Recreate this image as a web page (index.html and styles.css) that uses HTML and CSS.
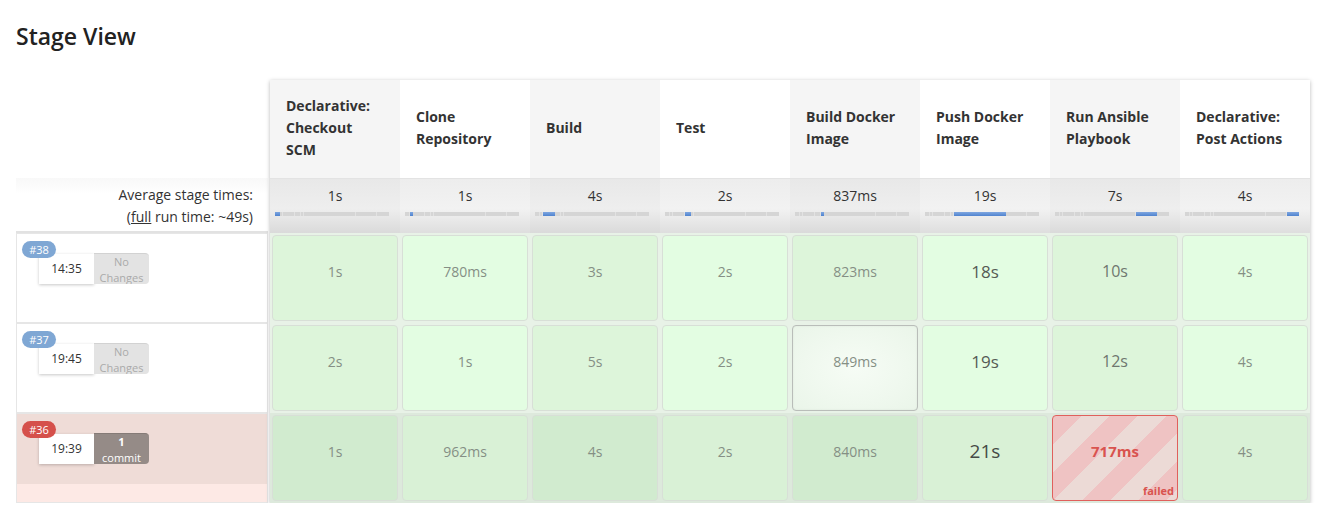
FILE: index.html
```html
<!DOCTYPE html>
<html>
<head>
<meta charset="utf-8">
<link rel="stylesheet" href="styles.css">
</head>
<body>
<div class="page">
  <h2 class="title">Stage View</h2>
  <div class="view">
    <div class="left">
      <div class="left-head"></div>
      <div class="avg-label">
        <div>Average stage times:</div>
        <div>(<span class="link">full</span> run time: ~49s)</div>
      </div>
      <div class="build">
        <div class="build-inner">
          <span class="badge blue">#38</span>
          <div class="stamp">
            <div class="time">14:35</div>
            <div class="changes">No<br>Changes</div>
          </div>
        </div>
      </div>
      <div class="build">
        <div class="build-inner">
          <span class="badge blue">#37</span>
          <div class="stamp">
            <div class="time">19:45</div>
            <div class="changes">No<br>Changes</div>
          </div>
        </div>
      </div>
      <div class="build failed-build">
        <div class="build-inner">
          <span class="badge red">#36</span>
          <div class="stamp">
            <div class="time">19:39</div>
            <div class="changes commit"><b>1</b><br>commit</div>
          </div>
        </div>
      </div>
    </div>

    <div class="stages">
      <div class="sh odd"><span>Declarative: Checkout SCM</span></div>
      <div class="sh"><span>Clone Repository</span></div>
      <div class="sh odd"><span>Build</span></div>
      <div class="sh"><span>Test</span></div>
      <div class="sh odd"><span>Build Docker Image</span></div>
      <div class="sh"><span>Push Docker Image</span></div>
      <div class="sh odd"><span>Run Ansible Playbook</span></div>
      <div class="sh"><span>Declarative: Post Actions</span></div>

      <div class="avg odd"><div class="avg-t">1s</div><div class="bar"><i class="on" style="width:5px"></i><i style="width:3px"></i><i style="width:12px"></i><i style="width:6px"></i><i style="width:3px"></i><i style="width:52px"></i><i style="width:21px"></i><i style="width:12px"></i></div></div>
      <div class="avg"><div class="avg-t">1s</div><div class="bar"><i style="width:5px"></i><i class="on" style="width:3px"></i><i style="width:12px"></i><i style="width:6px"></i><i style="width:3px"></i><i style="width:52px"></i><i style="width:21px"></i><i style="width:12px"></i></div></div>
      <div class="avg odd"><div class="avg-t">4s</div><div class="bar"><i style="width:5px"></i><i style="width:3px"></i><i class="on" style="width:12px"></i><i style="width:6px"></i><i style="width:3px"></i><i style="width:52px"></i><i style="width:21px"></i><i style="width:12px"></i></div></div>
      <div class="avg"><div class="avg-t">2s</div><div class="bar"><i style="width:5px"></i><i style="width:3px"></i><i style="width:12px"></i><i class="on" style="width:6px"></i><i style="width:3px"></i><i style="width:52px"></i><i style="width:21px"></i><i style="width:12px"></i></div></div>
      <div class="avg odd"><div class="avg-t">837ms</div><div class="bar"><i style="width:5px"></i><i style="width:3px"></i><i style="width:12px"></i><i style="width:6px"></i><i class="on" style="width:3px"></i><i style="width:52px"></i><i style="width:21px"></i><i style="width:12px"></i></div></div>
      <div class="avg"><div class="avg-t">19s</div><div class="bar"><i style="width:5px"></i><i style="width:3px"></i><i style="width:12px"></i><i style="width:6px"></i><i style="width:3px"></i><i class="on" style="width:52px"></i><i style="width:21px"></i><i style="width:12px"></i></div></div>
      <div class="avg odd"><div class="avg-t">7s</div><div class="bar"><i style="width:5px"></i><i style="width:3px"></i><i style="width:12px"></i><i style="width:6px"></i><i style="width:3px"></i><i style="width:52px"></i><i class="on" style="width:21px"></i><i style="width:12px"></i></div></div>
      <div class="avg"><div class="avg-t">4s</div><div class="bar"><i style="width:5px"></i><i style="width:3px"></i><i style="width:12px"></i><i style="width:6px"></i><i style="width:3px"></i><i style="width:52px"></i><i style="width:21px"></i><i class="on" style="width:12px"></i></div></div>

      <div class="cell odd"><div class="box">1s</div></div>
      <div class="cell"><div class="box">780ms</div></div>
      <div class="cell odd"><div class="box">3s</div></div>
      <div class="cell"><div class="box">2s</div></div>
      <div class="cell odd"><div class="box">823ms</div></div>
      <div class="cell"><div class="box big">18s</div></div>
      <div class="cell odd"><div class="box mid">10s</div></div>
      <div class="cell"><div class="box">4s</div></div>

      <div class="cell odd"><div class="box">2s</div></div>
      <div class="cell"><div class="box">1s</div></div>
      <div class="cell odd"><div class="box">5s</div></div>
      <div class="cell"><div class="box">2s</div></div>
      <div class="cell odd"><div class="box hover">849ms</div></div>
      <div class="cell"><div class="box big">19s</div></div>
      <div class="cell odd"><div class="box mid">12s</div></div>
      <div class="cell"><div class="box">4s</div></div>

      <div class="cell odd last"><div class="box">1s</div></div>
      <div class="cell last"><div class="box">962ms</div></div>
      <div class="cell odd last"><div class="box">4s</div></div>
      <div class="cell last"><div class="box">2s</div></div>
      <div class="cell odd last"><div class="box">840ms</div></div>
      <div class="cell last"><div class="box huge">21s</div></div>
      <div class="cell odd last"><div class="box fail">717ms<span class="fail-tag">failed</span></div></div>
      <div class="cell last"><div class="box">4s</div></div>
    </div>
  </div>
</div>
</body>
</html>
```

FILE: styles.css
```css
* { box-sizing: border-box; }

html, body {
  margin: 0;
  padding: 0;
  background: #fff;
}

body {
  font-family: "Open Sans", "Noto Sans", sans-serif;
  font-size: 14px;
  color: #333;
}

.page {
  padding: 0 16px;
}

.title {
  margin: 19px 0 27px;
  font-size: 23px;
  line-height: 34px;
  font-weight: 600;
  color: #222;
}

.view {
  display: flex;
  align-items: flex-start;
}

/* ---------- left column ---------- */
.left {
  width: 252px;
  margin-right: 2px;
  display: flex;
  flex-direction: column;
}

.left-head {
  height: 98px;
}

.avg-label {
  height: 55px;
  padding: 6px 15px 0 0;
  text-align: right;
  line-height: 22px;
  font-size: 14px;
  color: #333;
  background: linear-gradient(to bottom, #f8f8f8 0%, #fff 30%, #fff 100%);
  border-bottom: 2px solid #e2e2e2;
}

.link {
  text-decoration: underline;
}

.build {
  height: 90px;
  border: 1px solid #e6e6e6;
  background: #fff;
}

.build-inner {
  height: 70px;
  padding: 7px 0 0 5px;
}

.failed-build {
  background: #fde9e5;
}

.failed-build .build-inner {
  background: #efdcd7;
}

.badge {
  display: block;
  width: 34px;
  height: 17px;
  border-radius: 9px;
  font-size: 11px;
  line-height: 17px;
  text-align: center;
  color: #fff;
  position: relative;
  z-index: 1;
}

.badge.blue { background: #7fa7d4; }
.badge.red { background: #d5504b; }

.stamp {
  display: flex;
  margin: -4px 0 0 17px;
}

.time {
  width: 55px;
  height: 30px;
  background: #fff;
  box-shadow: 0 1px 3px rgba(0, 0, 0, 0.22);
  font-size: 12px;
  line-height: 30px;
  text-align: center;
  color: #333;
}

.changes {
  width: 55px;
  height: 31px;
  margin-top: -1px;
  overflow: hidden;
  background: #e3e3e3;
  border-top: 1px solid #d2d2d2;
  border-radius: 0 4px 4px 0;
  font-size: 11px;
  line-height: 16px;
  text-align: center;
  color: #aaa;
}

.changes.commit {
  background: #958b87;
  border-top-color: #857b77;
  color: #fff;
}

/* ---------- stage grid ---------- */
.stages {
  display: grid;
  grid-template-columns: repeat(8, 130px);
  grid-template-rows: 98px 55px 90px 90px 90px;
  box-shadow: 0 1px 4px rgba(0, 0, 0, 0.28);
}

.sh {
  display: flex;
  align-items: center;
  padding: 0 22px 2px 16px;
  background: #fff;
  font-weight: 700;
  font-size: 14px;
  line-height: 22px;
  color: #333;
}

.sh.odd {
  background: #f5f5f5;
}

.avg {
  padding-top: 6px;
  background: linear-gradient(to bottom, #ededed 0%, #f2f2f2 55%, #dedede 100%);
  border-top: 1px solid #e3e3e3;
}

.avg.odd {
  background: linear-gradient(to bottom, #e8e8e8 0%, #eeeeee 55%, #dadada 100%);
}

.avg-t {
  text-align: center;
  line-height: 22px;
  color: #333;
}

.bar {
  display: flex;
  width: 114px;
  height: 4px;
  margin: 5px 0 0 5px;
  background: #d7d7d7;
}

.bar i {
  display: block;
  height: 4px;
  background: #d5d5d5;
  border-right: 1px solid #e2e2e2;
}

.bar i:last-child {
  border-right: 0;
}

.bar i.on {
  background: linear-gradient(to bottom, #7ea6e0, #4f83cf);
  border-right: 0;
}

.cell {
  padding: 2px;
  background: #e8f2e7;
}

.cell.last {
  background: #dde9dc;
}

.box {
  height: 86px;
  display: flex;
  align-items: center;
  justify-content: center;
  padding-bottom: 14px;
  border: 1px solid #d8dfd7;
  border-radius: 4px;
  background: #e3fde2;
  font-size: 14px;
  color: #858f85;
  position: relative;
}

.cell.odd .box {
  background: #ddf5da;
}

.cell.last .box {
  background: #d9f1d6;
}

.cell.last.odd .box {
  background: #d1ebcf;
}

.box.mid {
  font-size: 16px;
  color: #6f776f;
}

.box.big {
  font-size: 17px;
  color: #555b55;
}

.box.huge {
  font-size: 19px;
  color: #454a45;
}

.cell.odd .box.hover {
  background: radial-gradient(ellipse at center, #f6fcf5 0%, #eff8ee 60%, #eaf5e9 100%);
  border-color: #b9bdb9;
  box-shadow: inset 0 0 2px rgba(0, 0, 0, 0.08);
}

.cell.last.odd .box.fail {
  border-color: #e0605c;
  background: repeating-linear-gradient(135deg, #efc3c3 0px, #efc3c3 20px, #ecdad6 20px, #ecdad6 40px);
  color: #d9534f;
  font-weight: 700;
  font-size: 15px;
}

.fail-tag {
  position: absolute;
  right: 3px;
  bottom: 2px;
  font-size: 11px;
  line-height: 14px;
  font-weight: 700;
  color: #d9534f;
}
```
